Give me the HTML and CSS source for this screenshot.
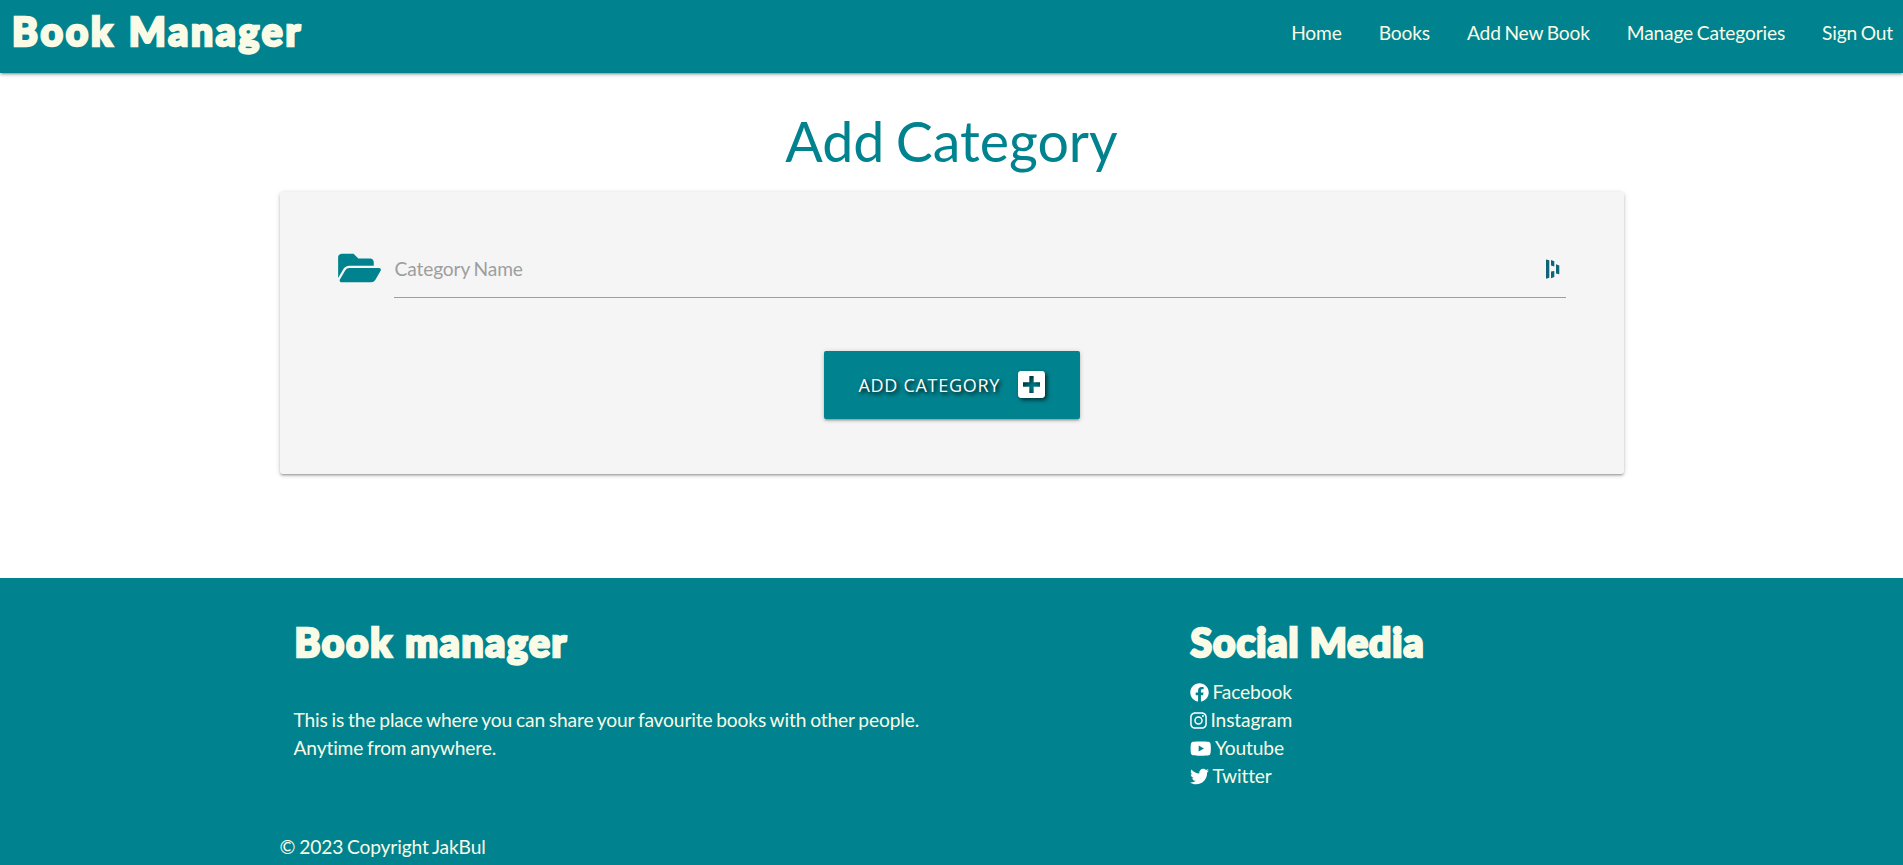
FILE: index.html
```html
<!DOCTYPE html>
<html lang="en">
<head>
<meta charset="utf-8">
<title>Book Manager</title>
<link rel="stylesheet" href="styles.css">
</head>
<body>
<header class="navbar">
  <a class="brand display">Book Manager</a>
  <nav class="links"><a>Home</a><a>Books</a><a>Add New Book</a><a>Manage Categories</a><a>Sign Out</a></nav>
</header>
<main class="container">
  <h1 class="title">Add Category</h1>
  <form class="card">
    <div class="field">
      <svg class="folder" viewBox="0 0 576 512"><path d="M572.694 292.093L500.270 416.248A63.997 63.997 0 0 1 444.989 448H45.025c-18.523 0-30.064-20.093-20.731-36.093l72.424-124.155A64 64 0 0 1 152 256h399.964c18.523 0 30.064 20.093 20.730 36.093zM152 224h328v-48c0-26.510-21.490-48-48-48H272l-64-64H48C21.490 64 0 85.490 0 112v278.046l69.077-118.418C86.214 242.250 117.989 224 152 224z"/></svg>
      <div class="input"><span>Category Name</span>
        <svg class="dash" viewBox="0 0 14 20"><path d="M0 .5l3.300 .8v17.500L0 19.800zM5 1l3.300 1.300v5.200L5 6.500zM5 12.500l3.300 -.5v6L5 19.200zM10 5.300l3.300 1.200v8.800L10 14.500z"/></svg>
      </div>
    </div>
    <button class="btn" type="button"><span>ADD CATEGORY</span>
      <svg class="plus" viewBox="0 0 448 448"><path fill-rule="evenodd" d="M48 0h352c27 0 48 21 48 48v352c0 27-21 48-48 48H48c-27 0-48-21-48-48V48C0 21 21 0 48 0zM188 83v105H83v72h105v105h72V260h105v-72H260V83z"/></svg>
    </button>
  </form>
</main>
<footer class="footer">
  <div class="container">
    <div class="cols">
      <section class="about"><h2 class="display">Book manager</h2><p>This is the place where you can share your favourite books with other people.<br>Anytime from anywhere.</p></section>
      <section class="social"><h2 class="display">Social Media</h2>
        <ul>
          <li><svg width="19" height="19" viewBox="0 0 512 512"><path d="M504 256C504 119 393 8 256 8S8 119 8 256c0 123.800 90.700 226.400 209.300 245V327.700h-63V256h63v-54.600c0-62.200 37-96.500 93.700-96.500 27.100 0 55.500 4.800 55.500 4.800v61h-31.300c-30.800 0-40.400 19.100-40.400 38.700V256h68.800l-11 71.700h-57.800V501C413.300 482.400 504 379.800 504 256z"/></svg>Facebook</li>
          <li><svg width="17" height="19" viewBox="0 0 448 512"><path fill-rule="evenodd" d="M130 32h188c72 0 130 58 130 130v188c0 72-58 130-130 130H130C58 480 0 422 0 350V162C0 90 58 32 130 32zm5 40C82 72 40 114 40 165v182c0 51 42 93 95 93h178c53 0 95-42 95-93V165c0-51-42-93-95-93zM224 141a115 115 0 1 1 0 230 115 115 0 0 1 0-230zm0 40a75 75 0 1 0 0 150 75 75 0 0 0 0-150z"/><circle cx="343" cy="137" r="27"/></svg>Instagram</li>
          <li><svg width="21.500" height="19" viewBox="0 0 576 512"><path fill-rule="evenodd" d="M549.700 124.100c-6.300-23.700-24.800-42.300-48.300-48.600C458.800 64 288 64 288 64S117.200 64 74.600 75.500c-23.500 6.300-42 24.900-48.300 48.600C14.900 167 14.900 256.400 14.900 256.400s0 89.400 11.400 132.300c6.300 23.700 24.800 41.500 48.300 47.800C117.200 448 288 448 288 448s170.800 0 213.400-11.500c23.500-6.300 42-24.200 48.300-47.800 11.400-42.900 11.400-132.300 11.400-132.300s0-89.400-11.400-132.300zM232.200 337.600V175.200l142.700 81.200z"/></svg>Youtube</li>
          <li><svg width="19" height="19" viewBox="0 0 512 512"><path d="M459.400 151.700c.3 4.500.3 9.100.3 13.600 0 138.700-105.600 298.600-298.600 298.600-59.500 0-114.700-17.200-161.100-47.100 8.400 1 16.600 1.300 25.300 1.300 49.100 0 94.200-16.600 130.300-44.800-46.100-1-84.800-31.200-98.100-72.800 6.500 1 13 1.600 19.800 1.600 9.400 0 18.800-1.300 27.600-3.600-48.100-9.700-84.100-52-84.100-103v-1.300c14 7.800 30.200 12.700 47.400 13.300-28.300-18.800-46.800-51-46.800-87.400 0-19.500 5.200-37.400 14.300-53 51.700 63.700 129.300 105.300 216.400 109.800-1.600-7.800-2.600-15.900-2.600-24 0-57.800 46.800-104.900 104.900-104.900 30.200 0 57.500 12.700 76.700 33.100 23.700-4.500 46.500-13.300 66.600-25.300-7.800 24.400-24.400 44.800-46.100 57.800 21.100-2.300 41.600-8.100 60.400-16.200-14.300 20.800-32.200 39.300-52.600 54.300z"/></svg>Twitter</li>
        </ul>
      </section>
    </div>
    <p class="copy">© 2023 Copyright JakBul</p>
  </div>
</footer>
</body>
</html>
```
FILE: styles.css
```css
* { box-sizing: border-box; }
body { margin: 0; height: 865px; overflow: hidden; display: flex; flex-direction: column; background: #fff; font: 19.2px/28px Lato, sans-serif; letter-spacing: -.14px; word-spacing: -.9px; font-variant-ligatures: none; color: #f9fbe7; }
h1, h2, p, ul { margin: 0; padding: 0; font-weight: 400; }
svg { fill: currentColor; flex: none; }
.display { font-family: Lato, sans-serif; font-weight: 900; -webkit-text-stroke: 2.6px #f9fbe7; white-space: nowrap; }
.navbar { height: 73px; flex: none; display: flex; justify-content: space-between; padding: 0 10px 0 12px; background: #00838f; box-shadow: 0 2px 2px rgba(0,0,0,.14), 0 3px 1px -2px rgba(0,0,0,.12), 0 1px 5px rgba(0,0,0,.2); }
.brand { font-size: 39px; line-height: 62px; letter-spacing: 2.8px; word-spacing: 1.5px; }
.links { display: flex; gap: 37px; line-height: 66px; letter-spacing: -.16px; word-spacing: -1.1px; }
.container { width: 1344px; margin: 0 auto; }
.title { padding-top: 36px; height: 119px; font-size: 55.500px; line-height: 64px; text-align: center; letter-spacing: 0; word-spacing: -3px; color: #00838f; }
.card { height: 282px; padding: 57px 58px 0; display: flex; flex-direction: column; align-items: center; background: #f5f5f5; border-radius: 3px; box-shadow: 0 2px 2px rgba(0,0,0,.14), 0 3px 1px -2px rgba(0,0,0,.12), 0 1px 5px rgba(0,0,0,.2); }
.field { width: 100%; display: flex; justify-content: space-between; }
.folder { width: 43px; height: 38px; color: #00838f; }
.input { width: 1172px; height: 49px; padding: 0 6px 8px 1px; display: flex; align-items: center; justify-content: space-between; border-bottom: 1px solid #9e9e9e; color: #9e9e9e; }
.dash { width: 14px; height: 20px; color: #0e6478; }
.btn { width: 256px; height: 68px; margin-top: 53px; padding: 0 35px; display: flex; align-items: center; justify-content: space-between; border: 0; border-radius: 2px; background: #00838f; color: #fff; font: 18px "Open Sans", sans-serif; letter-spacing: .7px; word-spacing: 0; text-shadow: 2px 2px 4px #000; white-space: nowrap; box-shadow: 0 2px 2px rgba(0,0,0,.14), 0 3px 1px -2px rgba(0,0,0,.12), 0 1px 5px rgba(0,0,0,.2); }
.plus { width: 27px; height: 27px; margin-bottom: 2px; filter: drop-shadow(2px 2px 2px rgba(0,0,0,.65)); }
.footer { height: 287px; margin-top: auto; background: #00838f; }
.cols { display: flex; height: 255px; padding: 42px 14px 0; }
.about { width: 896px; }
.cols h2 { padding-left: 1px; font-size: 39px; line-height: 44px; letter-spacing: 1.700px; word-spacing: 1px; }
.cols .social h2 { letter-spacing: 1px; word-spacing: 0; }
.about p { margin-top: 42px; }
.social ul { margin-top: 14px; list-style: none; }
.social li { display: flex; align-items: center; gap: 4px; }
.social svg { color: #fff; }
```
